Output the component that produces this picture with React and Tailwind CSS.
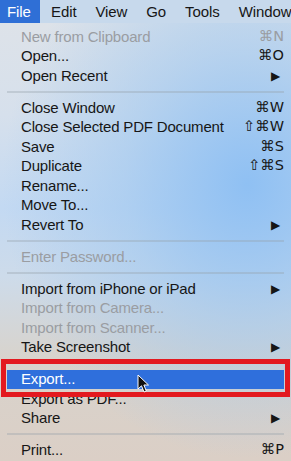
import React from "react";

const font = { fontFamily: '"Liberation Sans", "DejaVu Sans", sans-serif' };

const menus = ["Edit", "View", "Go", "Tools", "Window"];

// kind: item | sep
const items = [
  { label: "New from Clipboard", key: "⌘N", off: true },
  { label: "Open...", key: "⌘O" },
  { label: "Open Recent", sub: true },
  { sep: true },
  { label: "Close Window", key: "⌘W" },
  { label: "Close Selected PDF Document", key: "⇧⌘W" },
  { label: "Save", key: "⌘S" },
  { label: "Duplicate", key: "⇧⌘S" },
  { label: "Rename..." },
  { label: "Move To..." },
  { label: "Revert To", sub: true },
  { sep: true },
  { label: "Enter Password...", off: true },
  { sep: true },
  { label: "Import from iPhone or iPad", sub: true },
  { label: "Import from Camera...", off: true },
  { label: "Import from Scanner...", off: true },
  { label: "Take Screenshot", sub: true },
  { sep: true },
  { label: "Export...", active: true },
  { label: "Export as PDF..." },
  { label: "Share", sub: true },
  { sep: true },
  { label: "Print...", key: "⌘P" },
];

const Cursor = () => (
  <svg width="14" height="20" viewBox="0 0 14 20" className="absolute left-[137px] top-[374px]">
    <path
      d="M1 1 L1 15 L4.5 11.8 L7 18 L9.3 17 L6.9 11 L11.5 11 Z"
      fill="#111"
      stroke="#fff"
      strokeWidth="1"
      strokeLinejoin="round"
    />
  </svg>
);

export default function App() {
  return (
    <div
      className="relative w-[291px] h-[461px] overflow-hidden bg-[radial-gradient(ellipse_at_85%_40%,#8fc0f3_0%,rgba(160,200,240,0.6)_35%,rgba(200,215,235,0)_70%),linear-gradient(180deg,#dfe3e8_0%,#d6e0ec_25%,#c3d9f2_45%,#cddbea_60%,#d8d3cc_78%,#dbcfc6_100%)]"
      style={font}
    >
      <div className="flex h-[23px] bg-[#c7d9ec] text-[15px] text-[#161616] leading-[23px] whitespace-nowrap tracking-[-0.1px]">
        <div className="bg-[#2f6fd6] text-white pl-[7px] w-[40px] shrink-0">File</div>
        <div className="flex gap-[19px] pl-[11px]">
          {menus.map((m) => (
            <div key={m}>{m}</div>
          ))}
        </div>
      </div>

      <div className="pt-[4px] px-[7px] text-[15px] text-[#161616] tracking-[-0.18px]">
        {items.map((it, i) =>
          it.sep ? (
            <div key={i} className="h-[12.5px] flex items-center">
              <div className="h-[2px] w-full bg-[rgba(150,160,170,0.35)]" />
            </div>
          ) : (
            <div
              key={i}
              className={
                "h-[19.5px] flex items-center justify-between pl-[14px] " +
                (it.active ? "bg-[#2f6fdc] text-white" : it.off ? "text-[#9a9da2]" : "")
              }
            >
              <span className="whitespace-nowrap">{it.label}</span>
              {it.key && (
                <span
                  className="whitespace-nowrap tracking-normal"
                  style={{ fontFamily: '"DejaVu Sans", sans-serif', fontSize: "14.5px" }}
                >
                  {it.key}
                </span>
              )}
              {it.sub && <span className="text-[12px] mr-[4px]">▶</span>}
            </div>
          )
        )}
      </div>

      <div className="absolute left-[1px] top-[359px] w-[289px] h-[38px] border-[5px] border-[#e3191f]" />
      <Cursor />
    </div>
  );
}
